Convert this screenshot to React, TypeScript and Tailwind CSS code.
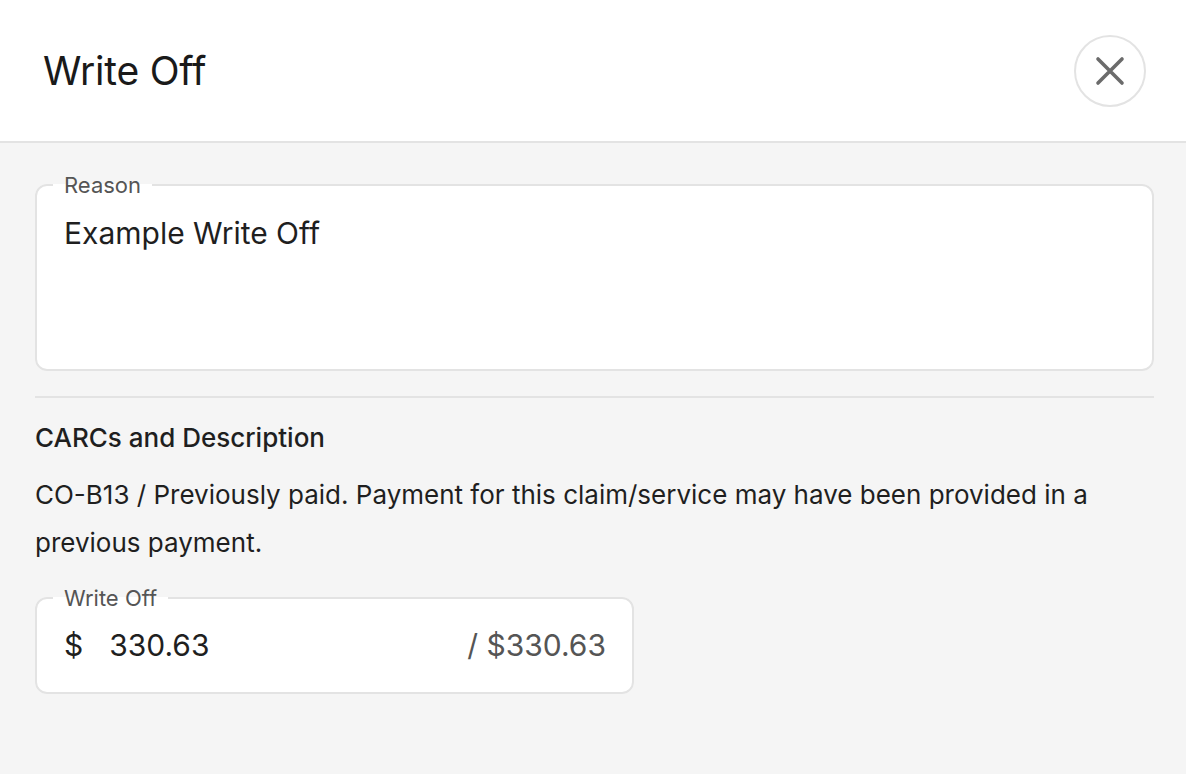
import React from "react";

export default function App() {
  return (
    <div className="min-h-screen w-full bg-[#f5f5f5] text-[#1f1f1f]" style={{ fontFamily: "Inter, 'Noto Sans', sans-serif" }}>
      <header className="h-[143px] bg-white border-b-2 border-[#e3e3e3] flex items-center justify-between pl-[43px] pr-[40px]">
        <h1 className="text-[39px] font-normal tracking-[-0.2px] text-[#1a1a1a] leading-none">Write Off</h1>
        <button className="w-[72px] h-[72px] rounded-full border-2 border-[#e3e3e3] bg-white flex items-center justify-center">
          <svg width="32" height="32" viewBox="0 0 32 32" fill="none" stroke="#6b6b6b" strokeWidth="3.6" strokeLinecap="round">
            <path d="M4 4 L28 28 M28 4 L4 28" />
          </svg>
        </button>
      </header>
      <main className="pl-[35px] pr-[32px] pt-[31px]">
        <fieldset className="border-2 border-[#e3e3e3] rounded-[12px] bg-white px-[16px] h-[197px]">
          <legend className="px-[11px] text-[22px] leading-[22px] text-[#555]">Reason</legend>
          <div className="pl-[11px] pt-[19px] text-[30px] leading-[36px] text-[#1f1f1f]">Example Write Off</div>
        </fieldset>
        <div className="mt-[25px] h-[2px] bg-[#e3e3e3]" />
        <div className="mt-[25px] text-[26px] leading-[30px] font-medium text-[#1f1f1f]">CARCs and Description</div>
        <p className="mt-[18px] text-[26px] leading-[48px] text-[#1f1f1f] max-w-[1090px]">
          CO-B13 / Previously paid. Payment for this claim/service may have been provided in a previous payment.
        </p>
        <fieldset className="mt-[20px] w-[599px] border-2 border-[#e3e3e3] rounded-[12px] bg-white px-[16px] h-[107px]">
          <legend className="px-[11px] text-[22px] leading-[22px] text-[#555]">Write Off</legend>
          <div className="pl-[11px] pr-[10px] pt-[18px] flex items-center text-[30px] leading-[36px]">
            <span className="text-[#1f1f1f]">$</span>
            <span className="ml-[26px] text-[#1f1f1f]">330.63</span>
            <span className="ml-auto text-[#555]">/ $330.63</span>
          </div>
        </fieldset>
      </main>
    </div>
  );
}
